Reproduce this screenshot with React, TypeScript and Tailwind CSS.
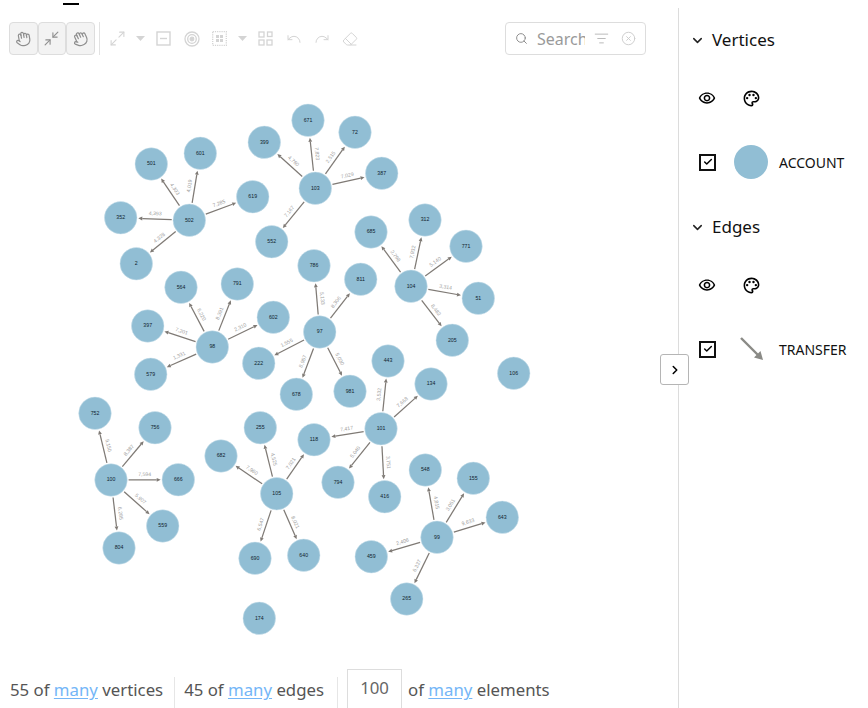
import { Hand, Minimize2, Maximize2, Undo, Redo, Eraser, Search, ListFilter, CircleX, ChevronDown, ChevronRight, Check } from "lucide-react";
import { MdOutlinePalette, MdOutlineRemoveRedEye } from "react-icons/md";

type N = [string, number, number];
const nodes: N[] = [
  ["501",151.3,164],["601",200.3,153.3],["619",252.7,196.7],["352",120.7,217.7],["502",189.3,220.3],["2",136.3,263.7],
  ["399",264.3,142.3],["552",271.7,241.7],["671",308,120.3],["72",355,132.3],["103",315.3,188.3],["387",381.7,173.3],
  ["685",371,232],["312",425,220],["771",466,246.3],["786",314,265.7],["564",181,287.3],["791",237.3,284],
  ["602",273.3,317.3],["397",147.7,326],["98",212.3,347],["579",150.7,374.3],["222",258.7,363.3],["97",319.7,332],
  ["811",360.7,279.3],["678",296.3,394.3],["981",350,391.3],["752",95,413.3],["756",155,427.7],["100",111,480],
  ["666",178.3,479.7],["559",162.7,526],["804",119,548],["255",260.3,427.7],["118",314,439.7],["682",221,456],
  ["105",276.7,493.7],["690",255,558.3],["640",303.7,555.3],["174",259.3,618.3],["443",388,361],["134",431,384],
  ["106",513.7,373.3],["101",381,428.7],["794",338,482.3],["416",384.7,496.7],["548",425.3,470],["155",473.3,478.3],
  ["643",502.3,517.3],["99",437,537.3],["459",371.3,556.7],["265",406.7,599],["104",411,286.3],["51",478.3,298.3],["205",452.3,340.3],
];
const edges: [string, string, string][] = [
  ["502","501","4,303"],["502","601","4,019"],["502","619","7,285"],["502","352","4,393"],["502","2","4,328"],
  ["103","399","4,760"],["103","671","7,823"],["103","72","2,515"],["103","387","7,029"],["103","552","7,167"],
  ["104","685","2,798"],["104","312","7,932"],["104","771","5,140"],["104","51","3,314"],["104","205","8,482"],
  ["98","564","6,220"],["98","791","8,391"],["98","602","2,310"],["98","397","7,201"],["98","579","1,331"],
  ["97","786","5,133"],["97","811","8,306"],["97","222","1,555"],["97","678","8,957"],["97","981","5,030"],
  ["100","752","9,150"],["100","756","8,387"],["100","666","7,594"],["100","559","5,907"],["100","804","6,285"],
  ["105","255","4,525"],["105","118","7,021"],["105","682","7,960"],["105","690","6,547"],["105","640","8,021"],
  ["101","443","3,532"],["101","134","7,668"],["101","118","7,417"],["101","794","5,040"],["101","416","3,751"],
  ["99","548","4,815"],["99","155","3,051"],["99","643","9,633"],["99","459","2,406"],["99","265","6,337"],
];
const pos = Object.fromEntries(nodes.map((n) => [n[0], n]));

function Graph() {
  return (
    <svg className="block w-[678px] flex-1 font-['Liberation_Sans',sans-serif]" viewBox="0 63 678 606">
      {edges.map(([a, b, l]) => {
        const A = pos[a], B = pos[b];
        const dx = B[1] - A[1], dy = B[2] - A[2];
        const d = Math.hypot(dx, dy);
        const ux = dx / d, uy = dy / d;
        const gap = 17.6;
        const x1 = A[1] + ux * gap, y1 = A[2] + uy * gap;
        const x2 = B[1] - ux * gap, y2 = B[2] - uy * gap;
        const hx = x2 - ux * 4, hy = y2 - uy * 4;
        const px = -uy * 1.9, py = ux * 1.9;
        let ang = (Math.atan2(dy, dx) * 180) / Math.PI;
        if (ang > 90) ang -= 180;
        if (ang < -90) ang += 180;
        const r = (ang * Math.PI) / 180;
        const mx = (A[1] + B[1]) / 2 + Math.sin(r) * 5.2;
        const my = (A[2] + B[2]) / 2 - Math.cos(r) * 5.2;
        return (
          <g key={a + b}>
            <line x1={x1} y1={y1} x2={hx} y2={hy} stroke="#7f7a75" strokeWidth={1.25} />
            <polygon points={`${x2},${y2} ${hx + px},${hy + py} ${hx - px},${hy - py}`} fill="#7f7a75" />
            <text x={mx} y={my} fontSize={5.2} fill="#a0a0a0" textAnchor="middle" dominantBaseline="middle" transform={`rotate(${ang} ${mx} ${my})`}>{l}</text>
          </g>
        );
      })}
      {nodes.map(([l, x, y]) => (
        <g key={l}>
          <circle cx={x} cy={y} r={16.3} fill="#91bed4" stroke="#cfe3ec" strokeWidth={0.5} />
          <text x={x} y={y} fontSize={5.2} fill="#10222c" textAnchor="middle" dominantBaseline="middle">{l}</text>
        </g>
      ))}
    </svg>
  );
}

function ToolBtn({ children }: { children: React.ReactNode }) {
  return (
    <div className="flex h-[33px] w-[28.5px] items-center justify-center rounded-[4px] border border-[#dddddd] bg-[#f3f3f3] text-[#8f8f8f]">{children}</div>
  );
}
function Slot({ w, children }: { w: string; children: React.ReactNode }) {
  return <div className={`flex items-center justify-center ${w} text-[#d4d4d4]`}>{children}</div>;
}
const Caret = () => (
  <svg width="9" height="5" viewBox="0 0 9 5"><path d="M0 0h9L4.5 5z" fill="#d4d4d4" /></svg>
);

function Section({ title, item, label }: { title: string; item: React.ReactNode; label: string }) {
  return (
    <div>
      <div className="flex h-[64px] items-center">
        <ChevronDown size={15} strokeWidth={2.4} className="ml-[11px] text-[#222222]" />
        <span className="ml-[7px] text-[17px] text-[#111111]">{title}</span>
      </div>
      <div className="flex h-[52px] items-center text-black">
        <MdOutlineRemoveRedEye size={18} className="ml-[19px]" />
        <MdOutlinePalette size={19} className="ml-[26px]" />
      </div>
      <div className="flex h-[71px] items-center pt-[5px]">
        <div className="ml-[20px] flex h-[17px] w-[17px] items-center justify-center border-2 border-[#111111]">
          <Check size={10} strokeWidth={3.5} className="text-black" />
        </div>
        <div className="flex w-[63px] items-center">{item}</div>
        <span className="text-[14px] whitespace-nowrap text-[#111111]">{label}</span>
      </div>
    </div>
  );
}

export default function App() {
  const many = <a className="text-[#74b6f7] underline underline-offset-2">many</a>;
  return (
    <div className="relative flex h-[708px] w-[868px] overflow-hidden bg-white font-['Noto_Sans',sans-serif]">
      <div className="flex w-[678px] flex-col">
        <div className="h-[22px]"><div className="ml-[63px] mt-[3px] h-[2px] w-[16px] bg-black" /></div>
        <div className="flex h-[41px] items-start justify-between pl-[9px] pr-[32px]">
          <div className="flex items-center">
            <ToolBtn><Hand size={16} strokeWidth={1.8} className="-rotate-[10deg]" /></ToolBtn>
            <ToolBtn><Minimize2 size={17} strokeWidth={1.6} /></ToolBtn>
            <ToolBtn><Hand size={16} strokeWidth={1.8} className="-rotate-[25deg]" /></ToolBtn>
            <div className="ml-[4px] mr-[4px] h-[33px] w-px bg-[#e2e2e2]" />
            <Slot w="w-[28px]"><Maximize2 size={17} strokeWidth={1.5} /></Slot>
            <Slot w="w-[18px]"><Caret /></Slot>
            <Slot w="w-[28px]">
              <svg width="15" height="15" viewBox="0 0 15 15" fill="none" stroke="currentColor" strokeWidth="1.4"><rect x="1" y="1" width="13" height="13" /><path d="M4 7.5h7" /></svg>
            </Slot>
            <Slot w="w-[28px]">
              <svg width="16" height="16" viewBox="0 0 16 16" fill="none" stroke="currentColor" strokeWidth="1.3"><circle cx="8" cy="8" r="7" /><circle cx="8" cy="8" r="4.3" /><circle cx="8" cy="8" r="1.8" fill="currentColor" /></svg>
            </Slot>
            <Slot w="w-[28px]">
              <svg width="15" height="15" viewBox="0 0 15 15" fill="currentColor"><rect x="0.7" y="0.7" width="13.6" height="13.6" fill="none" stroke="currentColor" strokeWidth="1.3" strokeDasharray="1.2 1" /><rect x="4" y="4" width="3" height="3" /><rect x="8" y="4" width="3" height="3" /><rect x="4" y="8" width="3" height="3" /><rect x="8" y="8" width="3" height="3" /></svg>
            </Slot>
            <Slot w="w-[18px]"><Caret /></Slot>
            <Slot w="w-[28px]">
              <svg width="15" height="15" viewBox="0 0 15 15" fill="none" stroke="currentColor" strokeWidth="1.3"><rect x="1" y="1" width="5" height="5" /><rect x="9.5" y="1" width="4.5" height="4.5" /><rect x="1" y="9" width="5" height="5" /><rect x="9" y="9" width="5" height="5" /></svg>
            </Slot>
            <Slot w="w-[28px]"><Undo size={16} strokeWidth={1.5} /></Slot>
            <Slot w="w-[28px]"><Redo size={16} strokeWidth={1.5} /></Slot>
            <Slot w="w-[28px]"><Eraser size={16} strokeWidth={1.5} /></Slot>
          </div>
          <div className="flex h-[33px] w-[141px] items-center rounded-[4px] border border-[#dddddd] pl-[9px]">
            <Search size={13} strokeWidth={1.8} className="shrink-0 text-[#8c8c8c]" />
            <div className="ml-[9px] w-[48px] overflow-hidden text-[16px] whitespace-nowrap text-[#9a9a9a]">Search</div>
            <ListFilter size={15} strokeWidth={1.6} className="ml-[9px] shrink-0 text-[#bbbbbb]" />
            <CircleX size={15} strokeWidth={1.5} className="ml-[12px] shrink-0 text-[#cccccc]" />
          </div>
        </div>
        <Graph />
        <div className="flex h-[39px] items-end pl-[10px] text-[16.8px] text-[#555555]">
          <div className="flex h-[31px] items-center whitespace-nowrap pb-[5px]">
            <span>55 of {many} vertices</span>
          </div>
          <div className="ml-[11px] h-[31px] w-px bg-[#e6e6e6]" />
          <div className="ml-[9px] flex h-[31px] items-center whitespace-nowrap pb-[5px]">
            <span>45 of {many} edges</span>
          </div>
          <div className="ml-[13px] h-[31px] w-px bg-[#e6e6e6]" />
          <div className="ml-[9px] flex h-[39px] w-[55px] items-center justify-center border border-b-0 border-[#dddddd] pb-[2px] text-[#666666]">100</div>
          <div className="ml-[6px] flex h-[31px] items-center whitespace-nowrap pb-[5px]">
            <span>of {many} elements</span>
          </div>
        </div>
      </div>
      <div className="mt-[8px] w-[190px] border-l border-[#dcdcdc]">
        <Section title="Vertices" label="ACCOUNT" item={<div className="ml-[18px] h-[34px] w-[34px] rounded-full bg-[#91bed4]" />} />
        <Section
          title="Edges"
          label="TRANSFER"
          item={
            <svg width="24" height="24" viewBox="0 0 24 24" className="ml-[24px]">
              <path d="M1 1 L19 19" stroke="#8a8a86" strokeWidth="2.4" />
              <path d="M23 23 L14 20.5 L20.5 14 Z" fill="#8a8a86" />
            </svg>
          }
        />
      </div>
      <div className="absolute left-[660px] top-[354px] flex h-[31px] w-[29px] items-center justify-center rounded-[3px] border border-[#b5b5b5] bg-white">
        <ChevronRight size={14} strokeWidth={2.6} className="text-black" />
      </div>
    </div>
  );
}
